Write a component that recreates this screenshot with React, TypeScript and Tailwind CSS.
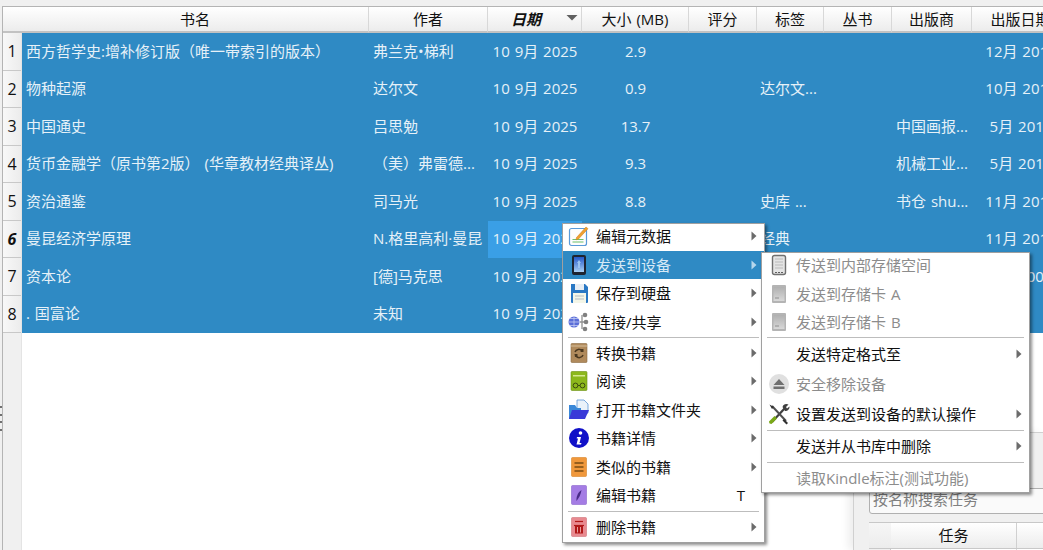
import React from "react";

const cols = "grid-cols-[347px_119px_94px_107px_68px_67px_68px_80px_98px]";

type Row = { n: number; c: string[] };
const rows: Row[] = [
  { n: 1, c: ["西方哲学史:增补修订版（唯一带索引的版本）", "弗兰克•梯利", "10 9月 2025", "2.9", "", "", "", "", "12月 2011"] },
  { n: 2, c: ["物种起源", "达尔文", "10 9月 2025", "0.9", "", "达尔文...", "", "", "10月 2011"] },
  { n: 3, c: ["中国通史", "吕思勉", "10 9月 2025", "13.7", "", "", "", "中国画报...", "5月 2011"] },
  { n: 4, c: ["货币金融学（原书第2版） (华章教材经典译丛)", "（美）弗雷德...", "10 9月 2025", "9.3", "", "", "", "机械工业...", "5月 2011"] },
  { n: 5, c: ["资治通鉴", "司马光", "10 9月 2025", "8.8", "", "史库 ...", "", "书仓 shu...", "11月 2011"] },
  { n: 6, c: ["曼昆经济学原理", "N.格里高利·曼昆", "10 9月 2025", "", "", "经典", "", "", "11月 2011"] },
  { n: 7, c: ["资本论", "[德]马克思", "10 9月 2025", "", "", "", "", "", "9月 2009"] },
  { n: 8, c: [". 国富论", "未知", "10 9月 2025", "", "", "", "", "", ""] },
];

const heads = ["书名", "作者", "日期", "大小 (MB)", "评分", "标签", "丛书", "出版商", "出版日期"];

const Arrow = ({ light }: { light?: boolean }) => (
  <svg width="6" height="10" viewBox="0 0 6 10" className="shrink-0">
    <path d="M0.5 0.5 L5.5 5 L0.5 9.5 Z" fill={light ? "#b5d6ec" : "#6b6b6b"} />
  </svg>
);

const I = ({ children }: { children: React.ReactNode }) => (
  <svg width="22" height="22" viewBox="0 0 22 22" className="shrink-0">
    {children}
  </svg>
);

const EditMeta = () => (
  <I>
    <rect x="1.500" y="3.500" width="17" height="17" rx="2" fill="#fdfdfd" stroke="#5a9ad8" strokeWidth="1.200" />
    <path d="M4.500 14.500h11M4.500 17h11" stroke="#6cc06c" strokeWidth="1.100" />
    <path d="M8.500 12.500 L18 2 L20 3.700 L10.500 14 L8 14.800 Z" fill="#f0a030" stroke="#c97a10" strokeWidth="0.500" />
  </I>
);
const Device = () => (
  <I>
    <rect x="4" y="1" width="14" height="20" rx="2" fill="#1e2430" />
    <defs>
      <linearGradient id="dv" x1="0" y1="0" x2="0" y2="1">
        <stop offset="0" stopColor="#2458c8" />
        <stop offset="1" stopColor="#a8d0f4" />
      </linearGradient>
    </defs>
    <rect x="6" y="3" width="10" height="15" fill="url(#dv)" />
    <path d="M11 6 L13 9 H12 V14 H10 V9 H9 Z" fill="#9cc4f0" />
  </I>
);
const Floppy = () => (
  <I>
    <path d="M3 2 H17 L20 5 V20 a1 1 0 0 1 -1 1 H4 a1 1 0 0 1 -1 -1 Z" fill="#2a78c4" />
    <rect x="7" y="2" width="9" height="6" fill="#e8eef4" />
    <rect x="5" y="11" width="13" height="10" fill="#f4f6e8" />
    <path d="M7 14h9M7 17h9" stroke="#b4bcc4" strokeWidth="1" />
  </I>
);
const Share = () => (
  <I>
    <circle cx="6" cy="11" r="5.500" fill="#5a6ed8" />
    <path d="M0.500 11h11M6 5.500v11M2 7.500h8M2 14.500h8" stroke="#c4ccf4" strokeWidth="0.800" />
    <path d="M14 4 V18 M12 11 H17" stroke="#909090" strokeWidth="1.300" />
    <circle cx="17" cy="4" r="2.300" fill="#808080" />
    <circle cx="18" cy="11" r="2.300" fill="#808080" />
    <circle cx="17" cy="18" r="2.300" fill="#808080" />
  </I>
);
const Convert = () => (
  <I>
    <rect x="3" y="1.500" width="16" height="19" rx="1" fill="#b08a5c" stroke="#8a6a40" strokeWidth="0.600" />
    <rect x="3" y="3.500" width="16" height="1" fill="#d8c09c" />
    <path d="M7 10 a4 4 0 0 1 7 -1 M15 13 a4 4 0 0 1 -7 1" stroke="#4a3820" strokeWidth="1.500" fill="none" />
    <path d="M13 7h2.500v3h-3zM6.500 12h3v3H7z" fill="#4a3820" />
  </I>
);
const Read = () => (
  <I>
    <rect x="3" y="1.500" width="16" height="19" rx="1" fill="#8cb81c" stroke="#6a9010" strokeWidth="0.600" />
    <rect x="5" y="5" width="12" height="1.500" fill="#d4e890" />
    <circle cx="7.500" cy="15.500" r="2.400" fill="none" stroke="#3c4a10" strokeWidth="1" />
    <circle cx="14.500" cy="15.500" r="2.400" fill="none" stroke="#3c4a10" strokeWidth="1" />
    <path d="M10 15.500h2" stroke="#3c4a10" strokeWidth="1" />
  </I>
);
const Folder = () => (
  <I>
    <path d="M9 1h7l4 4v9H9z" fill="#eaf2fa" stroke="#5a94d4" strokeWidth="0.800" />
    <path d="M1 6 H7 L9 9 H13 V20 H1 Z" fill="#3a88d8" />
    <path d="M4 11 H21 L17 20 H1 Z" fill="#3a3ad8" />
  </I>
);
const Info = () => (
  <I>
    <circle cx="11" cy="11" r="10" fill="#1010c8" />
    <circle cx="12.500" cy="6" r="1.800" fill="#fff" />
    <path d="M9 10 H13 L11.500 16 H13.500 L13 17.500 H8.500 L10 11.500 H8.700 Z" fill="#fff" />
  </I>
);
const Similar = () => (
  <I>
    <rect x="3.500" y="1.500" width="15" height="19" rx="1" fill="#f0983c" stroke="#d88428" strokeWidth="0.600" />
    <path d="M6.500 7h9M6.500 11h9M6.500 15h9" stroke="#7a4c14" strokeWidth="1.600" />
  </I>
);
const EditBook = () => (
  <I>
    <rect x="3.500" y="1.500" width="15" height="19" rx="1" fill="#a47ce4" stroke="#8c64cc" strokeWidth="0.600" />
    <path d="M13.500 6 C13 10 11 14 8.500 17 C8 13 10 8 13.500 6 Z" fill="#4a2c88" />
  </I>
);
const Trash = () => (
  <I>
    <rect x="3.500" y="1.500" width="15" height="19" rx="1" fill="#e88a90" stroke="#d0747a" strokeWidth="0.600" />
    <path d="M7 5.500h8" stroke="#b01818" strokeWidth="1.200" />
    <path d="M7 10h8v7.500H7z" fill="#b01818" />
    <path d="M6 9.500h10" stroke="#b01818" strokeWidth="1.200" />
    <path d="M9.500 11v5.500M12.500 11v5.500" stroke="#f4c0c0" strokeWidth="0.800" />
  </I>
);
const GrayDevice = () => (
  <I>
    <rect x="4.500" y="1.500" width="13" height="19" rx="2" fill="#e4e4e4" stroke="#707070" strokeWidth="1.400" />
    <path d="M7 5h8M7 8h8M7 11h8M7 14h8" stroke="#c8c8c8" strokeWidth="1.400" />
    <path d="M7 18.500h2M10 18.500h2M13 18.500h2" stroke="#606060" strokeWidth="1" />
  </I>
);
const Card = () => (
  <I>
    <defs>
      <linearGradient id="cd" x1="0" y1="0" x2="0" y2="1">
        <stop offset="0" stopColor="#b0b0b0" />
        <stop offset="1" stopColor="#d8d8d8" />
      </linearGradient>
    </defs>
    <rect x="4" y="2" width="14" height="18" rx="1" fill="#b4b4b4" />
    <rect x="5.500" y="4" width="11" height="14" fill="url(#cd)" />
    <path d="M7 15h4" stroke="#909090" strokeWidth="1" />
  </I>
);
const Eject = () => (
  <I>
    <circle cx="11" cy="11" r="10" fill="#e0e0e0" />
    <path d="M11 6 L16.500 12 H5.500 Z" fill="#707070" />
    <rect x="5.500" y="13.500" width="11" height="2.500" fill="#707070" />
  </I>
);
const Tools = () => (
  <I>
    <path d="M4 19 L17 5" stroke="#404040" strokeWidth="2.200" />
    <path d="M14.500 4 A4 4 0 0 1 20.500 1.500 L18 4 L19 5.500 L21.500 3.500 A4 4 0 0 1 17 8 Z" fill="#404040" />
    <path d="M4 3 L18 18" stroke="#505050" strokeWidth="2" />
    <path d="M1.500 1.500 L6 4 L4 6 Z" fill="#303030" />
    <path d="M1 18.500 L6.500 13 L9 15.500 L3.500 21 Q1 21 1 18.500 Z" fill="#7aa818" />
    <path d="M16 16 L20 20 L18.500 21.500 L14.500 17.500 Z" fill="#303030" />
  </I>
);

const Item = ({
  icon,
  label,
  arrow,
  active,
  shortcut,
  disabled,
  h,
  main,
}: {
  icon?: React.ReactNode;
  label: string;
  arrow?: boolean;
  active?: boolean;
  shortcut?: string;
  disabled?: boolean;
  h: string;
  main?: boolean;
}) => (
  <div
    className={`flex items-center pr-[7px] ${main ? "pl-[4px]" : "pl-[5px]"} ${h} ${active ? "bg-[#2f8ac4] text-[#d6e9f6]" : disabled ? "text-[#8c8c8c]" : "text-[#111111]"}`}
  >
    <div className="w-[24px] flex justify-center shrink-0">{icon}</div>
    <span className="pt-[1px] ml-[5px] flex-1 whitespace-nowrap">{label}</span>
    {shortcut && <span className="pt-[1px] mr-[12px]">{shortcut}</span>}
    {arrow && <Arrow light={active} />}
  </div>
);

const Sep = () => <div className="mx-[5px] my-[1px] h-px bg-[#bdbdbd]" />;

export default function App() {
  return (
    <div
      className="relative w-[1043px] h-[550px] overflow-hidden bg-[#f0f0f0] text-[15px] leading-none text-[#111111] [word-spacing:1px]"
      style={{ fontFamily: '"Open Sans","Noto Sans CJK SC",sans-serif' }}
    >
      <div className="h-[6px]" />
      <div className="ml-[2px] h-[544px] border-l border-t border-[#b4b4b4] flex flex-col">
        <div className="flex h-[26px] shrink-0">
          <div className="w-[19px] shrink-0 bg-gradient-to-b from-white to-[#ececec] border-b-2 border-[#c2c2c2]" />
          <div className={`grid ${cols} flex-1 min-w-0`}>
            {heads.map((h, i) => (
              <div
                key={h}
                className={`relative flex items-center justify-center whitespace-nowrap bg-gradient-to-b from-white to-[#ececec] border-b-2 border-r border-b-[#c2c2c2] border-r-[#d8d8d8] ${i === 2 ? "font-bold italic pr-[17px]" : ""}`}
              >
                {h}
                {i === 2 && (
                  <svg width="12" height="6" viewBox="0 0 12 6" className="absolute right-[3px] top-[8px]">
                    <path d="M0.500 0 H11.500 L6 5.500 Z" fill="#606060" />
                  </svg>
                )}
              </div>
            ))}
          </div>
        </div>
        <div className="flex flex-1 min-h-0">
          <div className="w-[19px] shrink-0 bg-[#f0f0f0] border-r border-[#e4e4e4]">
            {rows.map((r) => (
              <div
                key={r.n}
                className={`h-[37.5px] flex items-center justify-center border-b border-[#c8c8c8] bg-gradient-to-r from-[#f8f8f8] to-[#ececec] text-[16px] ${r.n === 6 ? "font-bold italic" : ""}`}
              >
                {r.n}
              </div>
            ))}
          </div>
          <div className="flex-1 min-w-0 bg-white overflow-hidden">
            <div className="bg-[#2f8ac4] text-[#e6f1f8]">
              {rows.map((r) => (
                <div key={r.n} className={`grid ${cols} h-[37.5px]`}>
                  {r.c.map((t, i) => (
                    <div
                      key={i}
                      className={`flex items-center whitespace-nowrap overflow-hidden pb-[1.500px] ${
                        i === 0 || i === 1 ? "pl-[4px]" : i === 5 ? "pl-[3px]" : i === 7 ? "pl-[4px]" : "justify-center"
                      } ${r.n === 6 && i === 2 ? "bg-[#3a9fe6]" : ""}`}
                    >
                      {t}
                    </div>
                  ))}
                </div>
              ))}
            </div>
          </div>
        </div>
      </div>

      {/* resize handle */}
      <div className="absolute left-0 top-[406px] flex flex-col gap-[5.500px]">
        {[0, 1, 2, 3].map((d) => (
          <div key={d} className="w-[2px] h-[2px] bg-[#707070]" />
        ))}
      </div>

      {/* jobs window */}
      <div className="absolute left-[853px] top-[432px] w-[190px] h-[118px] bg-[#f0f0f0] border-t border-l border-[#d0d0d0] shadow-[-5px_0_8px_rgba(0,0,0,0.07)] flex flex-col pl-[15px] overflow-hidden">
        <div className="h-[55px] shrink-0" />
        <div className="h-[26px] shrink-0 -mr-[10px] border border-[#b0b0b0] rounded-[3px] bg-[#fafafa] flex items-center pl-[3px] pb-[3px] text-[#808080] whitespace-nowrap">
          按名称搜索任务
        </div>
        <div className="mt-[8px] flex h-[26px] shrink-0 border-t border-[#c8c8c8]">
          <div className="w-[22px] shrink-0 bg-gradient-to-b from-[#f6f6f6] to-[#ececec]" />
          <div className="w-[126px] shrink-0 flex items-center justify-center bg-gradient-to-b from-white to-[#ececec] border-r border-[#d0d0d0]">
            任务
          </div>
          <div className="flex-1 bg-gradient-to-b from-white to-[#ececec]" />
        </div>
        <div className="flex h-[8px] shrink-0 border-t border-[#c8c8c8] bg-white">
          <div className="w-[22px] shrink-0 bg-[#f0f0f0] border-r border-[#c8c8c8]" />
          <div className="w-[126px] shrink-0 border-r border-[#d8d8d8]" />
        </div>
      </div>

      {/* main context menu */}
      <div className="absolute left-[562px] top-[223px] w-[203px] h-[320px] bg-white border border-[#a0a0a0] shadow-[2px_2px_3px_rgba(0,0,0,0.45)] flex flex-col">
        <Item main h="h-[27px] pb-[2px]" icon={<EditMeta />} label="编辑元数据" arrow />
        <Item main h="h-[29px]" icon={<Device />} label="发送到设备" arrow active />
        <Item main h="h-[29px]" icon={<Floppy />} label="保存到硬盘" arrow />
        <Item main h="h-[29px]" icon={<Share />} label="连接/共享" arrow />
        <Sep />
        <Item main h="h-[28px]" icon={<Convert />} label="转换书籍" arrow />
        <Item main h="h-[29px]" icon={<Read />} label="阅读" arrow />
        <Item main h="h-[29px]" icon={<Folder />} label="打开书籍文件夹" arrow />
        <Item main h="h-[29px]" icon={<Info />} label="书籍详情" arrow />
        <Item main h="h-[29px]" icon={<Similar />} label="类似的书籍" arrow />
        <Item main h="h-[29px]" icon={<EditBook />} label="编辑书籍" shortcut="T" />
        <Sep />
        <Item main h="h-[30px]" icon={<Trash />} label="删除书籍" arrow />
      </div>

      {/* send-to-device submenu */}
      <div className="absolute left-[761px] top-[252px] w-[269px] h-[241px] bg-white border border-[#a0a0a0] shadow-[2px_2px_3px_rgba(0,0,0,0.45)] flex flex-col">
        <Item h="h-[27px] pb-[2px]" icon={<GrayDevice />} label="传送到内部存储空间" disabled />
        <Item h="h-[29px]" icon={<Card />} label="发送到存储卡 A" disabled />
        <Item h="h-[29px]" icon={<Card />} label="发送到存储卡 B" disabled />
        <Sep />
        <Item h="h-[31px]" label="发送特定格式至" arrow />
        <Item h="h-[30px]" icon={<Eject />} label="安全移除设备" disabled />
        <Item h="h-[31px]" icon={<Tools />} label="设置发送到设备的默认操作" arrow />
        <Sep />
        <Item h="h-[29px]" label="发送并从书库中删除" arrow />
        <Sep />
        <Item h="h-[29px]" label="读取Kindle标注(测试功能)" disabled />
      </div>
    </div>
  );
}
